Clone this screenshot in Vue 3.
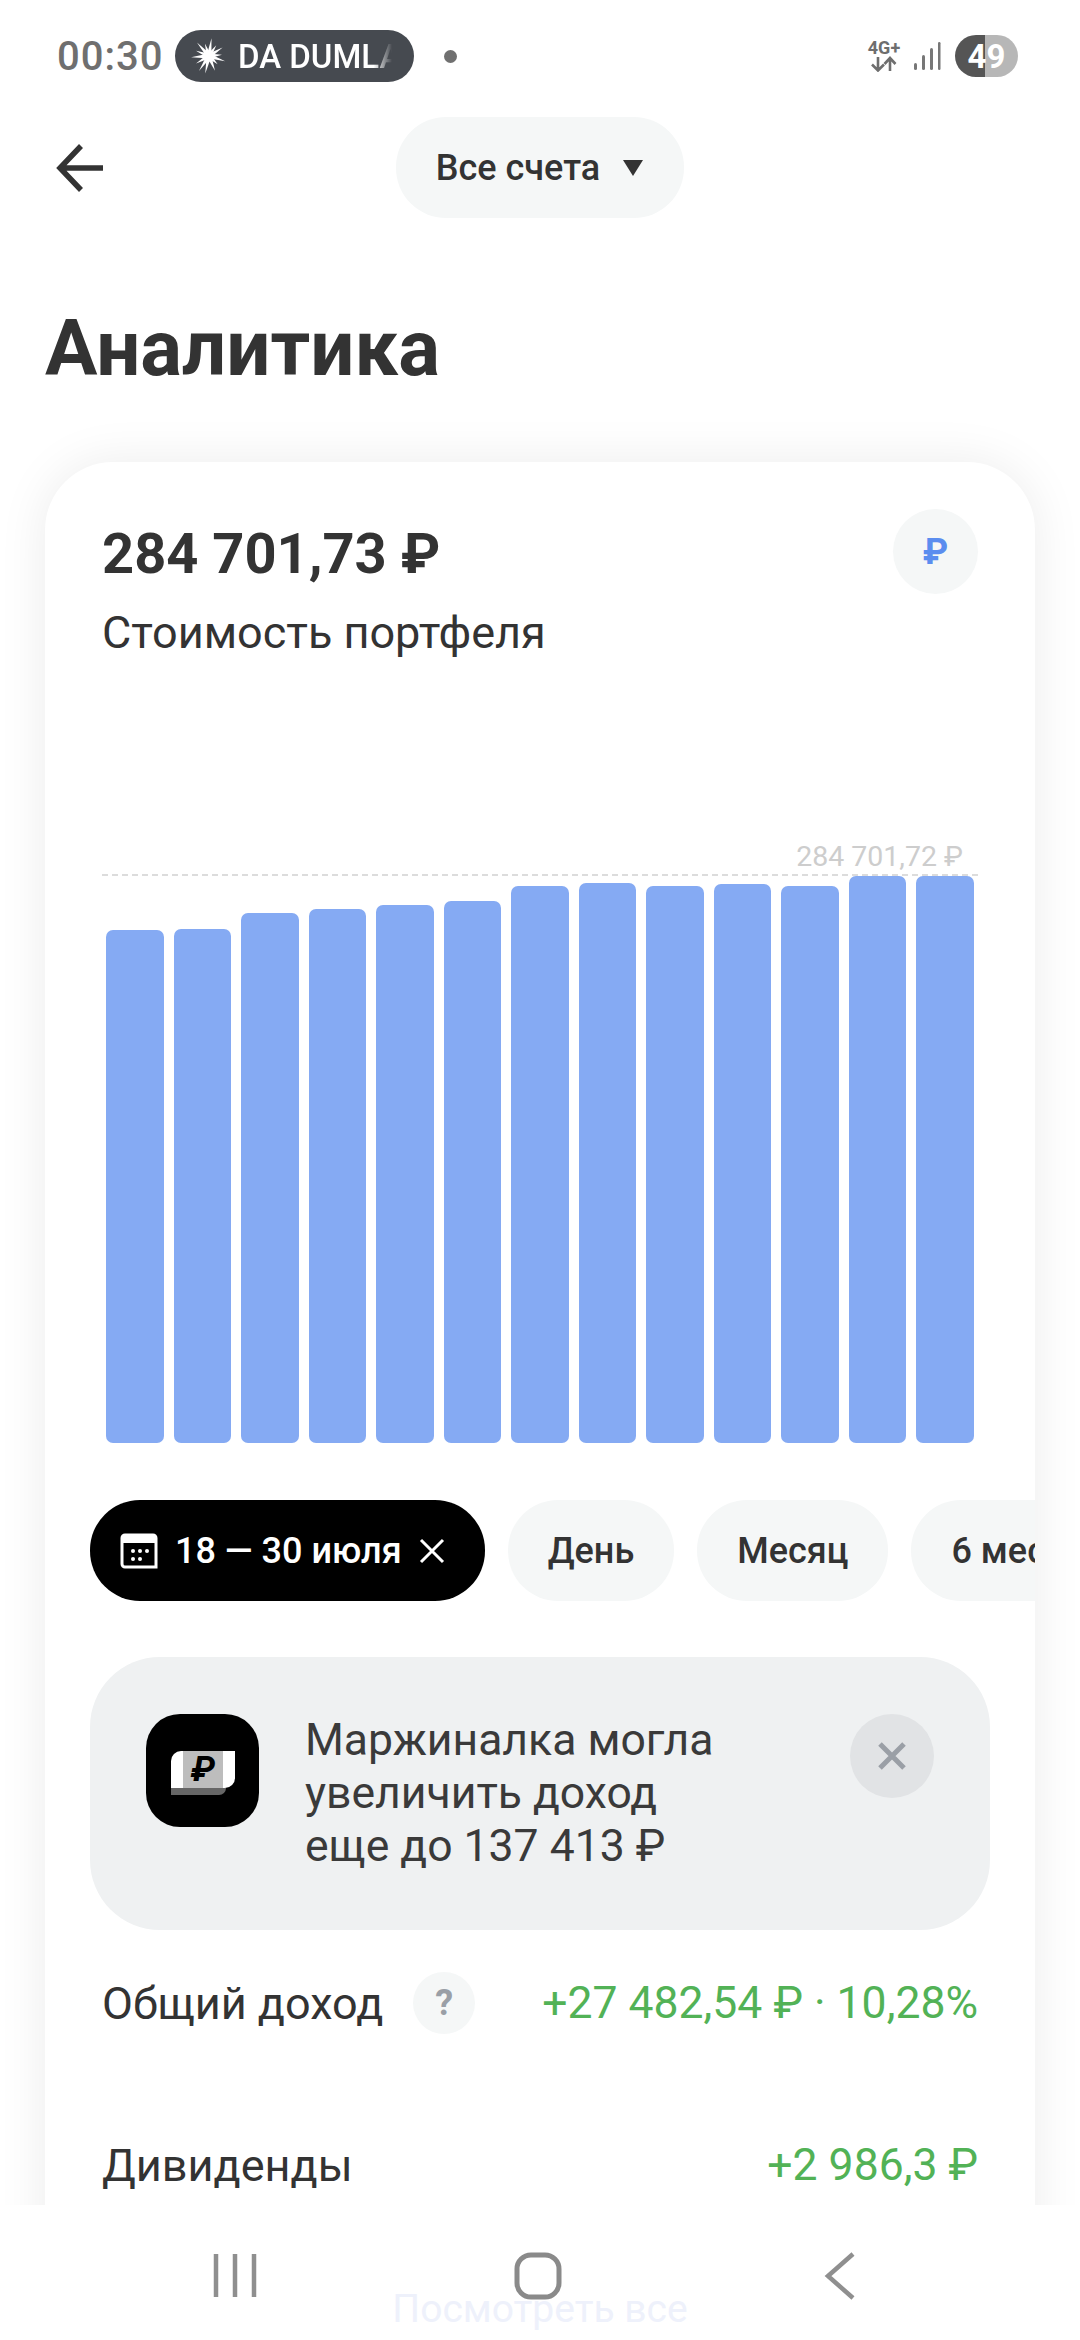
<script setup>
const chartHeight = 568;
const barTops = [929, 928, 912, 908, 904, 900, 885, 882, 885, 883, 885, 875, 875];
const bars = barTops.map((top) => 1442 - top);

// лучи звезды в статус-баре: угол и длина
const rays = [
  [8, 18], [34, 13], [58, 16], [84, 13], [108, 17], [134, 12], [158, 16],
  [192, 18], [214, 18], [240, 15], [266, 18], [292, 14], [318, 18], [342, 13],
];
const rayPoints = rays.map(([deg, len]) => {
  const a = (deg * Math.PI) / 180;
  const tip = [len * Math.sin(a), -len * Math.cos(a)];
  const side = [2.4 * Math.cos(a), 2.4 * Math.sin(a)];
  return `${tip[0]},${tip[1]} ${side[0]},${side[1]} ${-side[0]},${-side[1]}`;
});
const periods = ['День', 'Месяц', '6 месяцев'];
</script>

<template>
  <div class="screen">
    <div class="status-bar">
      <span class="time">00:30</span>
      <div class="now-playing">
        <svg class="star" width="36" height="36" viewBox="-18 -18 36 36" fill="#fff">
          <polygon v-for="(pts, i) in rayPoints" :key="i" :points="pts" />
          <circle r="5.500" />
        </svg>
        <span class="track"><span>DA DUMLA</span></span>
      </div>
      <span class="dot"></span>
      <div class="status-right">
        <div class="network">
          <span class="net-type">4G+</span>
          <svg width="30" height="16" viewBox="0 0 30 16" fill="none" stroke="#6e6e6e" stroke-width="2.600">
            <path d="M9 1v13M3 8.500l6 6 6-6M21 15V2M15.500 8l5.500-6 5.500 6" />
          </svg>
        </div>
        <svg class="signal" width="28" height="30" viewBox="0 0 28 30" fill="#777">
          <rect x="1" y="22" width="3" height="7" rx="1.500" />
          <rect x="9" y="14" width="3" height="15" rx="1.500" />
          <rect x="17" y="7" width="3" height="22" rx="1.500" />
          <rect x="25" y="1" width="2.500" height="28" rx="1.200" />
        </svg>
        <div class="battery"><span>49</span></div>
      </div>
    </div>

    <div class="top-nav">
      <svg class="back" width="48" height="48" viewBox="0 0 48 48" fill="none" stroke="#333" stroke-width="5.500">
        <path d="M47 24H4M25 2L4 24l21 22" />
      </svg>
      <div class="account-select">
        <span>Все счета</span>
        <i class="caret"></i>
      </div>
    </div>

    <h1 class="title">Аналитика</h1>

    <div class="card">
      <div class="card-head">
        <div>
          <div class="amount">284 701,73 ₽</div>
          <div class="amount-label">Стоимость портфеля</div>
        </div>
        <div class="currency">₽</div>
      </div>

      <div class="chart" :style="{ height: chartHeight + 'px' }">
        <div class="max-line"></div>
        <span class="max-label">284 701,72 ₽</span>
        <div class="bars">
          <div v-for="(h, i) in bars" :key="i" class="bar" :style="{ height: h + 'px' }"></div>
        </div>
      </div>

      <div class="chips">
        <div class="chip chip-active">
          <svg width="38" height="36" viewBox="0 0 38 36" fill="none">
            <path d="M2 5a3 3 0 0 1 3-3h28a3 3 0 0 1 3 3v29H5a3 3 0 0 1-3-3z" stroke="#fff" stroke-width="3" />
            <path d="M2 3h34v7H2z" fill="#fff" />
            <g fill="#fff">
              <circle cx="13" cy="18" r="2" /><circle cx="20" cy="18" r="2" /><circle cx="27" cy="18" r="2" />
              <circle cx="13" cy="26" r="2" /><circle cx="20" cy="26" r="2" />
            </g>
          </svg>
          <span>18 — 30 июля</span>
          <svg class="chip-x" width="26" height="26" viewBox="0 0 26 26" stroke="#fff" stroke-width="3">
            <path d="M2 2l22 22M24 2L2 24" />
          </svg>
        </div>
        <div v-for="p in periods" :key="p" class="chip">{{ p }}</div>
      </div>

      <div class="banner">
        <div class="banner-icon">
          <div class="note">
            <div class="note-center">₽</div>
          </div>
          <div class="note-shade"></div>
        </div>
        <div class="banner-text">Маржиналка могла<br />увеличить доход<br />еще до 137 413 ₽</div>
        <div class="banner-close">
          <svg width="30" height="30" viewBox="0 0 30 30" stroke="#9a9fa6" stroke-width="5">
            <path d="M3 3l24 24M27 3L3 27" />
          </svg>
        </div>
      </div>

      <div class="row row-income">
        <div class="row-name">
          <span>Общий доход</span>
          <span class="help">?</span>
        </div>
        <span class="gain">+27 482,54 ₽ · 10,28%</span>
      </div>
      <div class="row row-dividends">
        <span class="row-name">Дивиденды</span>
        <span class="gain">+2 986,3 ₽</span>
      </div>
    </div>

    <div class="nav-bar">
      <span class="see-all">Посмотреть все</span>
      <svg class="nav-icons" width="1080" height="135" viewBox="0 2205 1080 135" fill="none" stroke="#8f8f8f" stroke-width="4.500">
        <path d="M216 2254v43M235 2254v43M254 2254v43" />
        <rect x="517" y="2255" width="42" height="42" rx="14" stroke="#8a8a8a" stroke-width="5" />
        <path d="M853 2254l-25 22 25 22" />
      </svg>
    </div>
  </div>
</template>

<style scoped>
.screen {
  position: relative;
  width: 1080px;
  height: 2340px;
  overflow: hidden;
  background: #fff;
  font-family: Roboto, "Liberation Sans", sans-serif;
  color: #333;
}

.status-bar {
  display: flex;
  align-items: center;
  height: 52px;
  padding: 30px 62px 0 57px;
}

.time {
  font-size: 40px;
  font-weight: 500;
  letter-spacing: 1px;
  color: #6f6f6f;
  width: 118px;
}

.now-playing {
  display: flex;
  align-items: center;
  width: 239px;
  height: 52px;
  box-sizing: border-box;
  padding-left: 16px;
  border-radius: 26px;
  background: #464a50;
}

.star {
  flex: none;
}

.track {
  display: block;
  width: 154px;
  margin-left: 11px;
  overflow: hidden;
  white-space: nowrap;
  font-size: 33px;
  font-weight: 500;
  color: #fff;
  -webkit-mask-image: linear-gradient(to right, #000 88%, transparent 100%);
  mask-image: linear-gradient(to right, #000 88%, transparent 100%);
}

.dot {
  width: 13px;
  height: 13px;
  margin-left: 30px;
  border-radius: 50%;
  background: #707070;
}

.status-right {
  display: flex;
  align-items: center;
  margin-left: auto;
}

.network {
  display: flex;
  flex-direction: column;
  align-items: center;
  width: 34px;
  margin-right: 12px;
}

.net-type {
  font-size: 18px;
  font-weight: 700;
  line-height: 16px;
  color: #6e6e6e;
}

.signal {
  margin-right: 14px;
}

.battery {
  display: flex;
  align-items: center;
  justify-content: center;
  width: 63px;
  height: 42px;
  border-radius: 21px;
  background: linear-gradient(to right, #555 48%, #b7b7b7 48%);
  font-size: 33px;
  font-weight: 700;
  color: #fff;
}

.top-nav {
  position: relative;
  display: flex;
  justify-content: center;
  margin-top: 35px;
  height: 101px;
}

.back {
  position: absolute;
  left: 56px;
  top: 27px;
}

.account-select {
  display: flex;
  align-items: center;
  gap: 23px;
  height: 101px;
  padding: 0 41px 0 40px;
  border-radius: 50px;
  background: #f5f7f7;
  font-size: 36px;
  font-weight: 500;
}

.caret {
  width: 0;
  height: 0;
  border-left: 10px solid transparent;
  border-right: 10px solid transparent;
  border-top: 16px solid #333;
}

.title {
  margin: 86px 0 0 45px;
  font-size: 78px;
  line-height: 90px;
  font-weight: 700;
  color: #333;
}

.card {
  width: 990px;
  box-sizing: border-box;
  height: 1800px;
  margin: 68px 0 0 45px;
  padding-top: 47px;
  border-radius: 68px 68px 0 0;
  background: #fff;
  box-shadow: 0 0 50px rgba(0, 0, 0, 0.08);
}

.card-head {
  display: flex;
  justify-content: space-between;
  padding: 0 57px;
}

.amount {
  margin-top: 15px;
  font-size: 56px;
  line-height: 60px;
  font-weight: 700;
}

.amount-label {
  margin-top: 24px;
  font-size: 45px;
  line-height: 50px;
}

.currency {
  display: flex;
  align-items: center;
  justify-content: center;
  width: 85px;
  height: 85px;
  border-radius: 50%;
  background: #f5f7f7;
  font-size: 36px;
  font-weight: 700;
  color: #5b8def;
}

.chart {
  position: relative;
  margin: 217px 57px 0 57px;
  padding-left: 4px;
  display: flex;
  align-items: flex-end;
}

.max-line {
  position: absolute;
  left: 0;
  right: 0;
  top: -1px;
  border-top: 2px dashed #dcdcdc;
}

.max-label {
  position: absolute;
  top: -35px;
  right: 15px;
  font-size: 28.500px;
  line-height: 34px;
  color: #cdcdcd;
}

.bars {
  display: flex;
  align-items: flex-end;
  gap: 10px;
  width: 868px;
}

.bar {
  flex: 1;
  border-radius: 7px;
  background: #85aaf3;
}

.chips {
  display: flex;
  gap: 23px;
  margin-top: 57px;
  padding-left: 45px;
  overflow: hidden;
}

.chip {
  flex: none;
  display: flex;
  align-items: center;
  height: 101px;
  padding: 0 40px;
  border-radius: 50px;
  background: #f5f7f7;
  font-size: 36px;
  font-weight: 500;
}

.chip-active {
  gap: 17px;
  padding: 0 40px 0 30px;
  background: #000;
  color: #fff;
}

.banner {
  display: flex;
  align-items: flex-start;
  height: 273px;
  box-sizing: border-box;
  margin: 56px 45px 0;
  padding: 57px 56px 0;
  border-radius: 70px;
  background: #eff1f2;
}

.banner-icon {
  position: relative;
  flex: none;
  width: 113px;
  height: 113px;
  border-radius: 34px;
  background: #000;
}

.note {
  position: absolute;
  left: 25px;
  top: 37px;
  width: 64px;
  height: 37px;
  border-radius: 10px 0 10px 0;
  background: #fff;
}

.note-center {
  width: 40px;
  height: 37px;
  margin-left: 12px;
  background: #bdbdbd;
  color: #000;
  font-size: 35px;
  line-height: 37px;
  font-weight: 700;
  font-style: italic;
  text-align: center;
}

.note-shade {
  position: absolute;
  left: 25px;
  top: 74px;
  width: 55px;
  height: 7px;
  border-radius: 0 0 8px 0;
  background: #666;
}

.banner-text {
  flex: 1;
  margin: 0 0 0 46px;
  font-size: 44.500px;
  line-height: 53px;
  color: #3a3a3a;
}

.banner-close {
  display: flex;
  align-items: center;
  justify-content: center;
  flex: none;
  width: 84px;
  height: 84px;
  border-radius: 50%;
  background: #e1e3e5;
}

.row {
  display: flex;
  align-items: center;
  justify-content: space-between;
  padding: 0 57px;
  height: 62px;
  font-size: 45px;
}

.row-income {
  margin-top: 42px;
}

.row-dividends {
  margin-top: 100px;
}

.row-name {
  display: flex;
  align-items: center;
  gap: 30px;
  color: #333;
}

.help {
  display: flex;
  align-items: center;
  justify-content: center;
  width: 62px;
  height: 62px;
  border-radius: 50%;
  background: #f5f7f7;
  font-size: 36px;
  font-weight: 700;
  color: #9a9fa6;
}

.gain {
  font-size: 44.500px;
  color: #52b256;
}

.nav-bar {
  position: absolute;
  left: 0;
  right: 0;
  bottom: 0;
  height: 135px;
  background: #fff;
}

.see-all {
  position: absolute;
  left: 0;
  right: 0;
  top: 79px;
  text-align: center;
  font-size: 39px;
  line-height: 50px;
  color: #eef1fb;
}

.nav-icons {
  position: absolute;
  left: 0;
  top: 0;
}
</style>
